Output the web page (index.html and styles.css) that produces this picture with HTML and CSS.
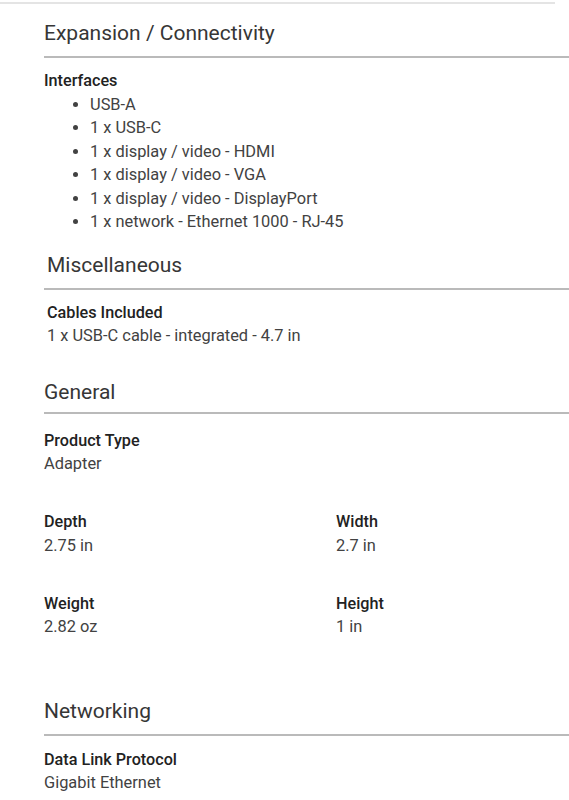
FILE: index.html
```html
<!DOCTYPE html>
<html lang="en">
<head>
<meta charset="utf-8">
<title>Specifications</title>
<link rel="stylesheet" href="styles.css">
</head>
<body>
<div class="top-rule"></div>
<div class="specs">
  <section class="group group-expansion">
    <h2 class="group-title">Expansion / Connectivity</h2>
    <div class="group-body">
      <div class="spec">
        <div class="spec-label">Interfaces</div>
        <ul class="spec-list">
          <li>USB-A</li>
          <li>1 x USB-C</li>
          <li>1 x display / video - HDMI</li>
          <li>1 x display / video - VGA</li>
          <li>1 x display / video - DisplayPort</li>
          <li>1 x network - Ethernet 1000 - RJ-45</li>
        </ul>
      </div>
    </div>
  </section>

  <section class="group group-misc">
    <h2 class="group-title">Miscellaneous</h2>
    <div class="group-body">
      <div class="spec">
        <div class="spec-label">Cables Included</div>
        <div class="spec-value">1 x USB-C cable - integrated - 4.7 in</div>
      </div>
    </div>
  </section>

  <section class="group group-general">
    <h2 class="group-title">General</h2>
    <div class="group-body grid">
      <div class="spec">
        <div class="spec-label">Product Type</div>
        <div class="spec-value">Adapter</div>
      </div>
      <div class="spec"></div>
      <div class="spec">
        <div class="spec-label">Depth</div>
        <div class="spec-value">2.75 in</div>
      </div>
      <div class="spec">
        <div class="spec-label">Width</div>
        <div class="spec-value">2.7 in</div>
      </div>
      <div class="spec">
        <div class="spec-label">Weight</div>
        <div class="spec-value">2.82 oz</div>
      </div>
      <div class="spec">
        <div class="spec-label">Height</div>
        <div class="spec-value">1 in</div>
      </div>
    </div>
  </section>

  <section class="group group-networking">
    <h2 class="group-title">Networking</h2>
    <div class="group-body">
      <div class="spec">
        <div class="spec-label">Data Link Protocol</div>
        <div class="spec-value">Gigabit Ethernet</div>
      </div>
    </div>
  </section>
</div>
</body>
</html>
```

FILE: styles.css
```css
html, body {
  margin: 0;
  padding: 0;
  background: #ffffff;
  overflow: hidden;
}

body {
  font-family: Roboto, "Liberation Sans", Arial, sans-serif;
  color: #444444;
  font-size: 16.4px;
  line-height: 23.5px;
}

.top-rule {
  width: 555px;
  height: 2px;
  margin-top: 2px;
  background: #e4e4e4;
}

.specs {
  padding-left: 44px;
}

.group-title {
  margin: 0;
  font-size: 21px;
  font-weight: 400;
  line-height: 28px;
  color: #363636;
  padding-bottom: 9px;
  border-bottom: 2px solid #bababa;
}

.group-body {
  margin-top: 11px;
}

.spec-label {
  font-size: 16.2px;
  font-weight: 500;
  color: #222222;
}

.spec-value {
  color: #424242;
}

.spec-list {
  margin: 0;
  padding-left: 46px;
  color: #424242;
}

.grid {
  display: grid;
  grid-template-columns: 292px 1fr;
  row-gap: 34.5px;
}

.group-expansion {
  margin-top: 15px;
}

.group-misc {
  margin-top: 17px;
}

.group-misc .group-title {
  padding-left: 3px;
}

.group-misc .group-body {
  padding-left: 3px;
}

.group-general {
  margin-top: 30px;
}

.group-general .group-title {
  padding-bottom: 6px;
}

.group-general .group-body {
  margin-top: 15px;
}

.group-networking {
  margin-top: 58px;
}

.group-networking .group-body {
  margin-top: 12px;
}
```
